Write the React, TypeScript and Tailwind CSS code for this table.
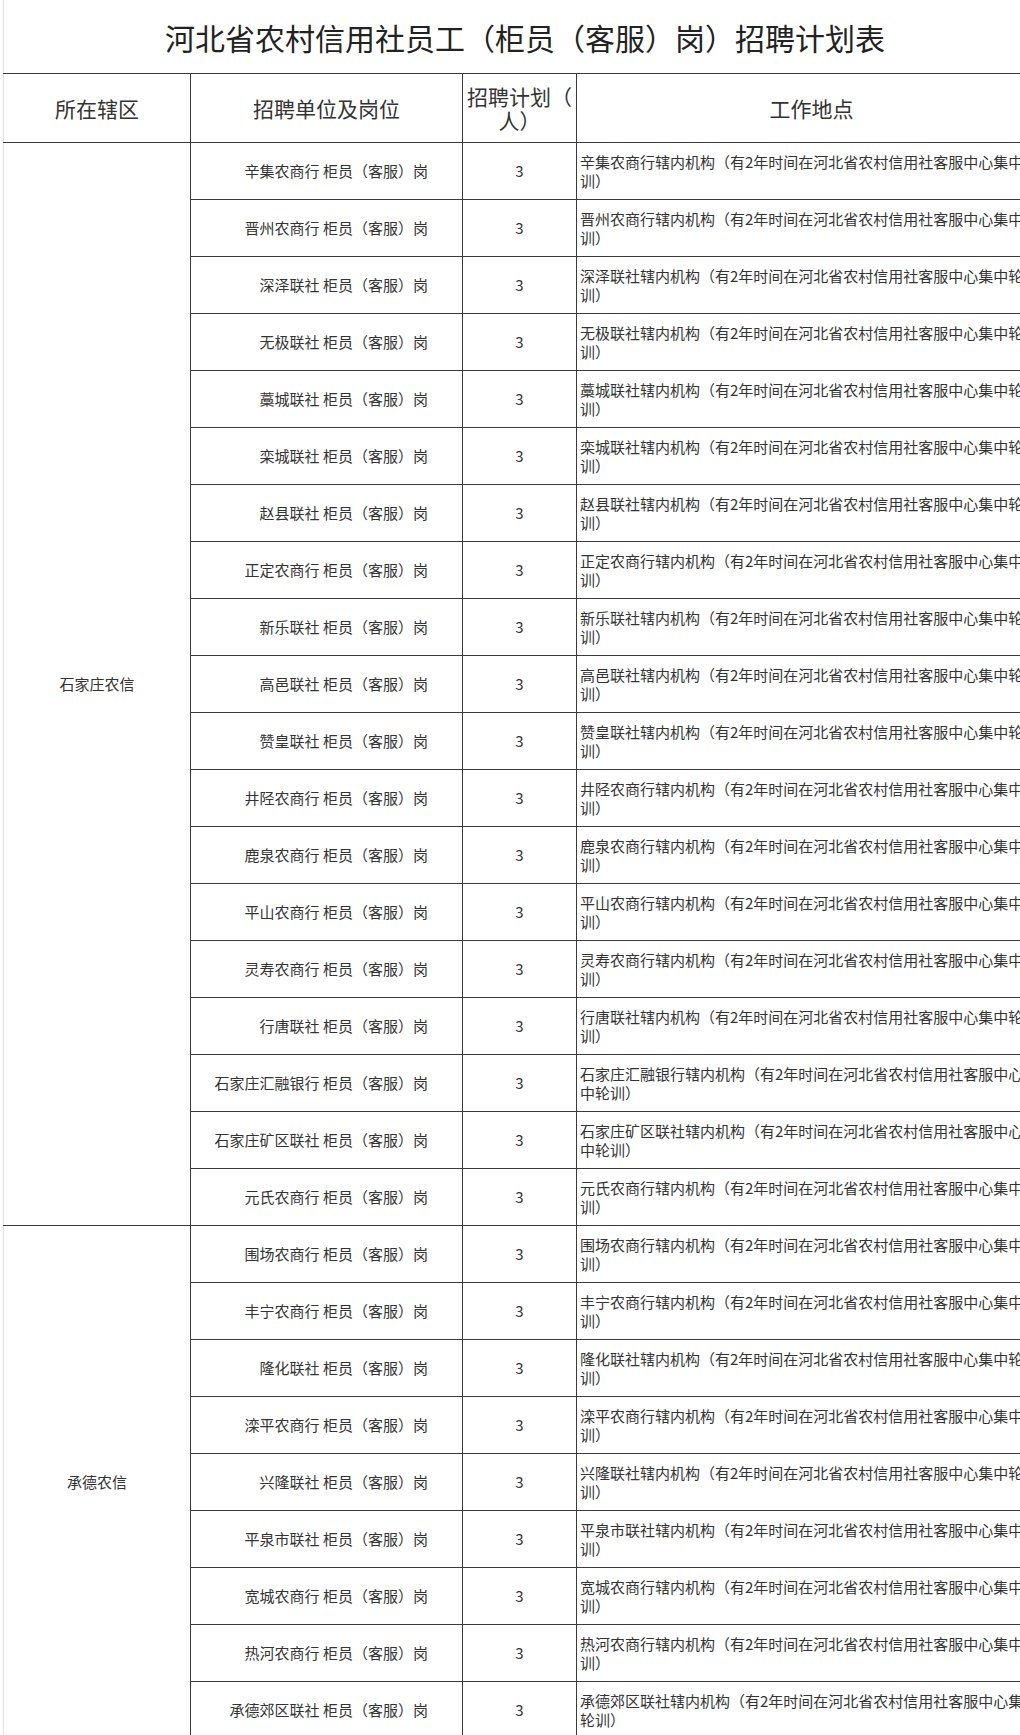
const SJZ = [
  '辛集农商行',
  '晋州农商行',
  '深泽联社',
  '无极联社',
  '藁城联社',
  '栾城联社',
  '赵县联社',
  '正定农商行',
  '新乐联社',
  '高邑联社',
  '赞皇联社',
  '井陉农商行',
  '鹿泉农商行',
  '平山农商行',
  '灵寿农商行',
  '行唐联社',
  '石家庄汇融银行',
  '石家庄矿区联社',
  '元氏农商行',
];

const CD = [
  '围场农商行',
  '丰宁农商行',
  '隆化联社',
  '滦平农商行',
  '兴隆联社',
  '平泉市联社',
  '宽城农商行',
  '热河农商行',
  '承德郊区联社',
];

const groups = [
  { area: '石家庄农信', units: SJZ },
  { area: '承德农信', units: CD },
];

const line = 'border border-[#3a3a3a]';

export default function App() {
  return (
    <div
      className="w-[1020px] h-[1735px] overflow-hidden bg-white text-[#333]"
      style={{ fontFamily: '"Noto Sans CJK SC", "Noto Sans", sans-serif' }}
    >
      <div className="w-[1046px] pl-[3px]">
        <div className="h-[73px] flex items-center justify-center border-l border-[#e2e2e2] text-[30px] text-[#222] pt-[1px]">
          河北省农村信用社员工（柜员（客服）岗）招聘计划表
        </div>
        <table className="table-fixed border-collapse w-[1043px]">
          <colgroup>
            <col className="w-[187px]" />
            <col className="w-[272px]" />
            <col className="w-[114px]" />
            <col className="w-[470px]" />
          </colgroup>
          <thead>
            <tr className="h-[69px] text-[21px] leading-[24px]">
              <th className={`${line} border-l-[#e2e2e2] font-normal`}>所在辖区</th>
              <th className={`${line} font-normal`}>招聘单位及岗位</th>
              <th className={`${line} font-normal whitespace-nowrap`}>
                招聘计划（
                <br />
                人）
              </th>
              <th className={`${line} font-normal`}>工作地点</th>
            </tr>
          </thead>
          <tbody className="text-[15px]">
            {groups.map((g) =>
              g.units.map((u, i) => (
                <tr key={u} className="h-[57px]">
                  {i === 0 && (
                    <td rowSpan={g.units.length} className={`${line} border-l-[#e2e2e2] text-center`}>
                      {g.area}
                    </td>
                  )}
                  <td className={`${line} text-right pr-[34px] whitespace-nowrap`}>{u} 柜员（客服）岗</td>
                  <td className={`${line} text-center`}>3</td>
                  <td className={`${line} pl-[3px] pr-[1px] leading-[19px] align-middle`}>
                    {u}辖内机构（有2年时间在河北省农村信用社客服中心集中轮训）
                  </td>
                </tr>
              ))
            )}
          </tbody>
        </table>
      </div>
    </div>
  );
}
